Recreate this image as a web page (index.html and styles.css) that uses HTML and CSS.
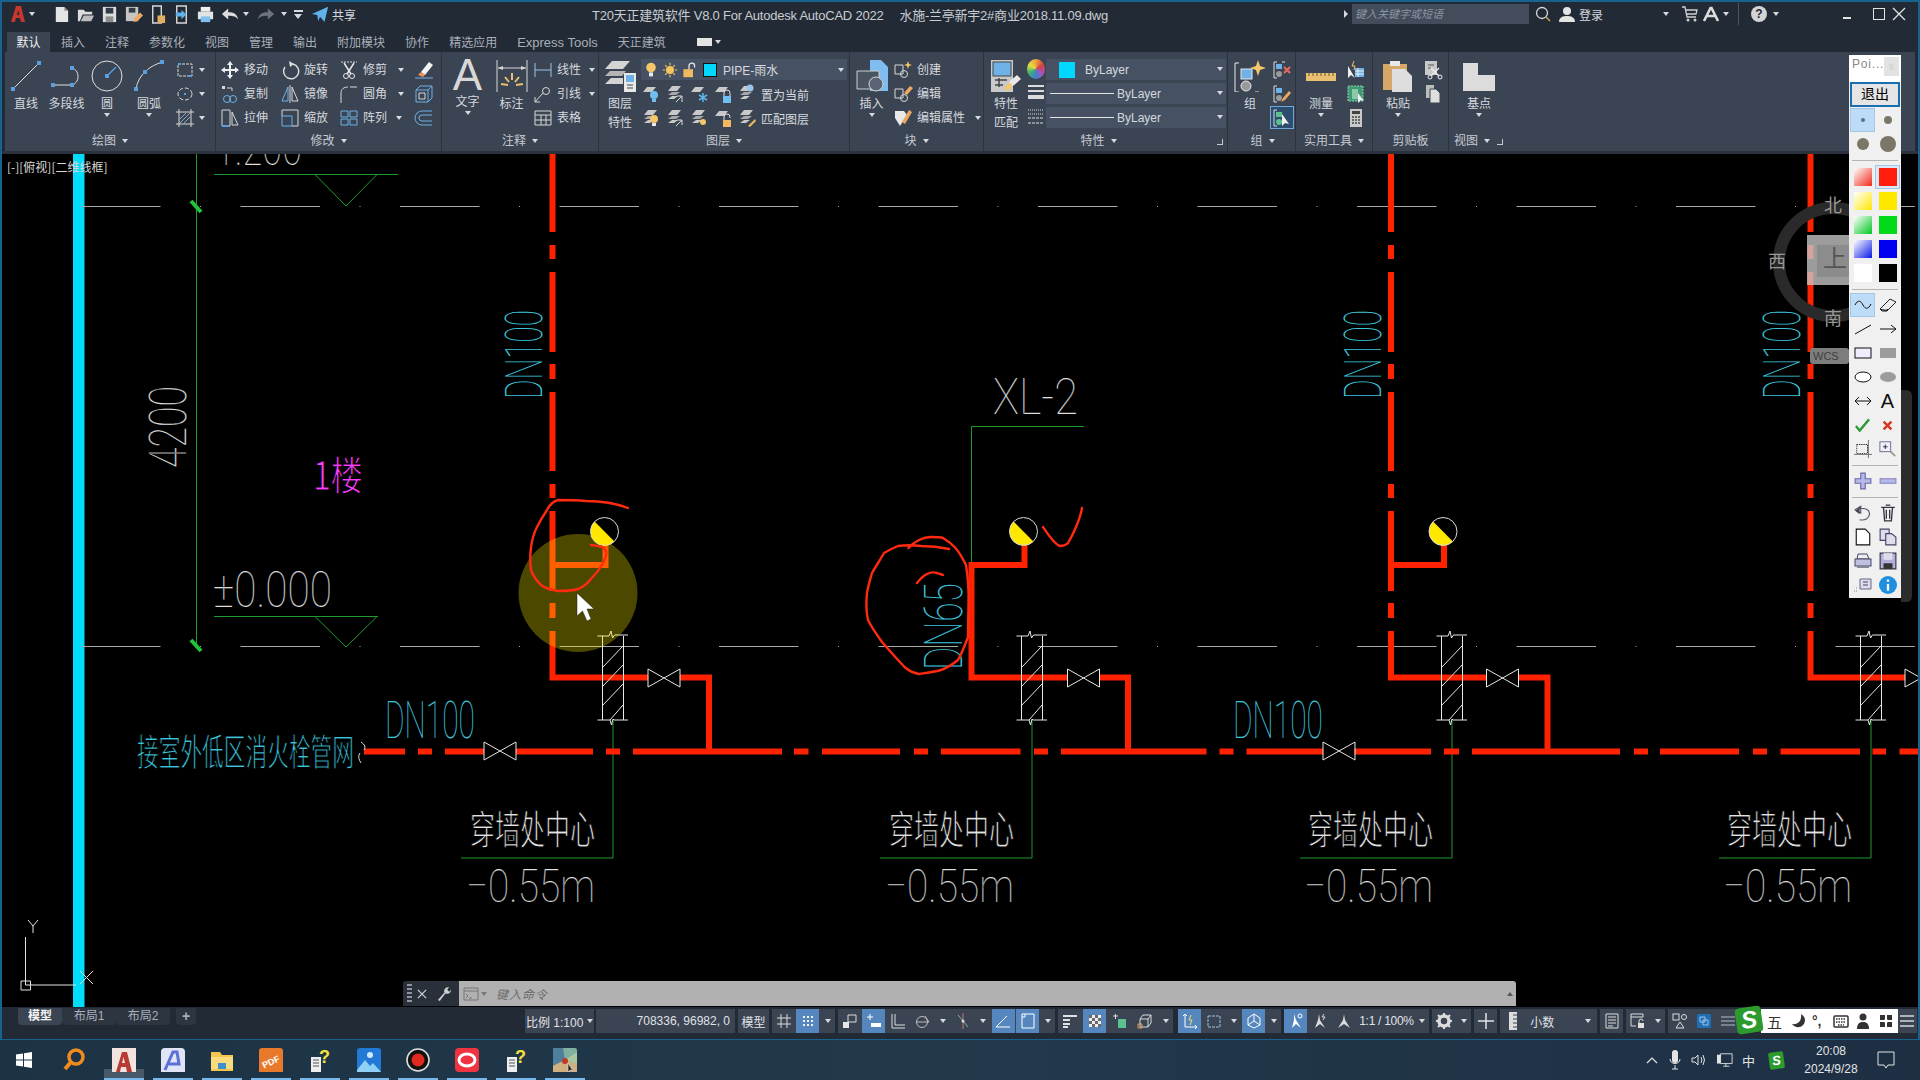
FILE: index.html
```html
<!DOCTYPE html>
<html lang="zh-CN">
<head>
<meta charset="utf-8">
<title>AutoCAD 2022</title>
<link rel="stylesheet" href="styles.css">
</head>
<body>
<svg class="defs" width="0" height="0" aria-hidden="true">
  <defs>
    <symbol id="ly" viewBox="0 0 20 20"><path d="M3 7l4-5h9l-4 5z" fill="#c9c9c9"/><path d="M3 11l4-3h8l-4 3z" fill="#a8a8a8"/><path d="M3 15l4-3h6l-4 3z" fill="#c9c9c9"/></symbol>
    <symbol id="ly1" viewBox="0 0 20 20"><path d="M2 8l4-5h9l-4 5z" fill="#c9c9c9"/></symbol>
    <symbol id="bulb" viewBox="0 0 20 20"><circle cx="10" cy="7" r="6" fill="#f5c66a"/><rect x="7.5" y="13" width="5" height="5" fill="#e8e8e8"/></symbol>
    <symbol id="sun" viewBox="0 0 20 20"><circle cx="10" cy="10" r="5" fill="#f6c75f"/><path d="M10 1v3M10 16v3M1 10h3M16 10h3M4 4l2 2M14 14l2 2M16 4l-2 2M6 14l-2 2" stroke="#f6c75f" stroke-width="1.4"/></symbol>
    <symbol id="lock" viewBox="0 0 20 20"><rect x="3" y="9" width="12" height="10" fill="#f0b860"/><path d="M10 9V5a3.5 3.5 0 0 1 7 0v2" fill="none" stroke="#e8e8e8" stroke-width="1.6"/></symbol>
    <g id="wall" fill="none" stroke="#e8e8e8" stroke-width="1">
      <path d="M597.5 636H609l2-5 1.500 7 2-3H628M602.500 636V720M623.500 636V720M597.500 720H610l1.500 5 1.500-6 1 1H628"/>
      <path d="M603 667L623 646M603 686L623 665M603 705L623 684M610 720L623 705"/>
    </g>
    <path id="bow" d="M0 0L32 18V0L0 18Z" fill="none" stroke="#e8e8e8" stroke-width="1"/>
    <g id="head">
      <path d="M594.600 521.600A14 14 0 0 0 614.400 541.400Z" fill="#ffe800"/>
      <circle cx="604.500" cy="531.500" r="14" fill="none" stroke="#dcdcdc" stroke-width="1"/>
    </g>
  </defs>
</svg>

<div class="window">
  <header class="titlebar">
    <div class="qat">
      <svg class="logo" viewBox="0 0 16 18"><path d="M1 17L6 1h5l4 16h-4l-1-4H6l-1 4zM7 10h2.500L8.300 5z" fill="#c8372d"/></svg>
      <i class="ar ar-logo"></i>
      <svg class="q q-first" viewBox="0 0 20 20"><path d="M4 2h9l4 4v12H4z" fill="#e4e4e4"/><path d="M13 2v4h4" fill="#8a8a8a"/></svg>
      <svg class="q" viewBox="0 0 20 20"><path d="M2 17V5h6l2 2h7v3H7l-3 7z" fill="#dcdcdc"/><path d="M5 17l3-6h11l-3 6z" fill="#bdbdbd"/></svg>
      <svg class="q" viewBox="0 0 20 20"><path d="M3 2h14v16H3z" fill="#dcdcdc"/><path d="M6 3h8v6H6z" fill="#333b47"/><path d="M6 12h8v6H6z" fill="#8d8d8d"/></svg>
      <svg class="q" viewBox="0 0 20 20"><path d="M2 2h13v15H2z" fill="#c6c6c6"/><path d="M5 3h7v5H5z" fill="#333b47"/><path d="M10 18l1-4 6-6 3 3-6 6z" fill="#f0a860"/></svg>
      <svg class="q" viewBox="0 0 20 20"><path d="M5 1h9v18H5z" fill="none" stroke="#d8d8d8" stroke-width="1.500"/><path d="M10 11h8v8h-8z" fill="#e0b060"/></svg>
      <svg class="q" viewBox="0 0 20 20"><path d="M5 1h10v18H5z" fill="none" stroke="#d8d8d8" stroke-width="1.500"/><path d="M4 8h6V5l5 5-5 5v-3H4z" fill="#5fb2ea"/></svg>
      <svg class="q" viewBox="0 0 20 20"><path d="M5 2h10v5H5z" fill="#f0f0f0"/><path d="M2 7h16v8H2z" fill="#e4e4e4"/><path d="M5 12h10v6H5z" fill="#7fc0ee"/></svg>
      <svg class="u" viewBox="0 0 20 20"><path d="M1 10l7-6v4c6 0 10 2 11 8-2-3-5-4-11-4v4z" fill="#dcdcdc"/></svg>
      <i class="ar ar-u"></i>
      <svg class="u r" viewBox="0 0 20 20"><path d="M19 10l-7-6v4C6 8 2 10 1 16c2-3 5-4 11-4v4z" fill="#6d747f"/></svg>
      <i class="ar ar-u ar-dim"></i>
      <span class="cust"></span>
      <svg class="share" viewBox="0 0 20 20"><path d="M1 10L19 2l-4 17-5-6-2 5-1-7z" fill="#5fb2ea"/></svg>
      <span class="share-t">共享</span>
    </div>
    <div class="app-title"><span>T20天正建筑软件 V8.0 For Autodesk AutoCAD 2022</span><span>水施-兰亭新宇2#商业2018.11.09.dwg</span></div>
    <div class="tb-right">
      <i class="tri-r"></i>
      <div class="search">键入关键字或短语</div>
      <svg class="mag" viewBox="0 0 16 16"><circle cx="7" cy="7" r="5.500" fill="none" stroke="#d8d8d8" stroke-width="1.300"/><path d="M11 11l4 4" stroke="#d0a060" stroke-width="1.500"/></svg>
      <svg class="user" viewBox="0 0 16 16"><circle cx="8" cy="5" r="4" fill="#e4e4e4"/><path d="M0 16c0-5 4-6 8-6s8 1 8 6z" fill="#e4e4e4"/></svg>
      <span class="login">登录</span>
      <i class="ar ar-login"></i>
      <svg class="cart" viewBox="0 0 18 18"><path d="M1 2h3l2 10h9M5 5h11l-1 4H6" fill="none" stroke="#cfcfcf" stroke-width="1.300"/><circle cx="7" cy="15" r="1.500" fill="#cfcfcf"/><circle cx="14" cy="15" r="1.500" fill="#cfcfcf"/></svg>
      <svg class="a360" viewBox="0 0 18 18"><path d="M9 2L2 16M9 2l7 14M5 11h8" fill="none" stroke="#dcdcdc" stroke-width="2.600"/></svg>
      <i class="ar ar-a"></i>
      <span class="vdiv"></span>
      <span class="help">?</span>
      <i class="ar ar-h"></i>
      <span class="wmin"></span>
      <span class="wmax"></span>
      <svg class="wclose" viewBox="0 0 14 14"><path d="M1 1l12 12M13 1L1 13" stroke="#e4e4e4" stroke-width="1.300"/></svg>
    </div>
  </header>

  <nav class="tabs">
    <span class="tab on">默认</span><span class="tab">插入</span><span class="tab">注释</span><span class="tab">参数化</span><span class="tab">视图</span><span class="tab">管理</span><span class="tab">输出</span><span class="tab">附加模块</span><span class="tab">协作</span><span class="tab">精选应用</span><span class="tab en">Express Tools</span><span class="tab">天正建筑</span>
    <span class="tabbox"></span><i class="ar ar-tab"></i>
  </nav>

  <section class="ribbon">
    <!-- 绘图 -->
    <div class="panel p-draw">
      <div class="pbody">
        <div class="lg w42"><svg class="big" viewBox="0 0 32 32"><path d="M3 29L29 3" stroke="#e0e0e0"/><rect x="1" y="27" width="4" height="4" fill="#5a9fe0"/><rect x="27" y="1" width="4" height="4" fill="#5a9fe0"/></svg><span>直线</span></div>
        <div class="lg w39"><svg class="big" viewBox="0 0 32 32"><path d="M2 25H21A9 9 0 0 0 21 8" fill="none" stroke="#e0e0e0"/><rect x="0" y="23" width="4" height="4" fill="#5a9fe0"/><rect x="19" y="23" width="4" height="4" fill="#5a9fe0"/><rect x="19" y="6" width="4" height="4" fill="#5a9fe0"/></svg><span>多段线</span></div>
        <div class="lg w42"><svg class="big" viewBox="0 0 32 32"><circle cx="16" cy="16" r="15" fill="none" stroke="#e0e0e0"/><path d="M16 16L25 7" stroke="#5a9fe0" stroke-width="1.500"/><rect x="14" y="14" width="4" height="4" fill="#5a9fe0"/></svg><span>圆</span><i class="ar ar-lg"></i></div>
        <div class="lg w42"><svg class="big" viewBox="0 0 32 32"><path d="M3 30C4 18 14 6 30 2" fill="none" stroke="#e0e0e0"/><rect x="1" y="27" width="4" height="4" fill="#5a9fe0"/><rect x="10" y="10" width="4" height="4" fill="#5a9fe0"/><rect x="27" y="0" width="4" height="4" fill="#5a9fe0"/></svg><span>圆弧</span><i class="ar ar-lg"></i></div>
        <div class="col col-dr">
          <div class="s"><svg class="i" viewBox="0 0 20 20"><path d="M3 4h14v12H3z" fill="none" stroke="#d8d8d8" stroke-dasharray="3 1"/><path d="M3 4h3M17 16h-3" stroke="#5a9fe0" stroke-width="2"/></svg><i class="ar ar-s"></i></div>
          <div class="s"><svg class="i" viewBox="0 0 20 20"><ellipse cx="10" cy="10" rx="7" ry="6" fill="none" stroke="#d8d8d8" stroke-dasharray="4 2"/><rect x="9" y="9" width="2" height="2" fill="#5a9fe0"/></svg><i class="ar ar-s"></i></div>
          <div class="s"><svg class="i" viewBox="0 0 20 20"><path d="M1 4h18M1 16h18M4 1v18M16 1v18" stroke="#d8d8d8" fill="none"/><path d="M5 15L15 5M5 11l6-6M9 15l6-6" stroke="#8fa9c8"/></svg><i class="ar ar-s"></i></div>
        </div>
      </div>
      <div class="pfoot"><span>绘图</span><i class="ar"></i></div>
    </div>

    <!-- 修改 -->
    <div class="panel p-mod">
      <div class="pbody">
        <div class="col col60">
          <div class="s"><svg class="i" viewBox="0 0 20 20"><path d="M10 1l3 4h-2v4h4V7l4 3-4 3v-2h-4v4h2l-3 4-3-4h2v-4H5v2l-4-3 4-3v2h4V5H7z" fill="#eee"/></svg><span>移动</span></div>
          <div class="s"><svg class="i" viewBox="0 0 20 20"><rect x="2" y="2" width="3" height="3" fill="#d8d8d8"/><path d="M7 4h5v3" fill="none" stroke="#d8d8d8"/><circle cx="7" cy="15" r="3.500" fill="none" stroke="#6fb2e8"/><circle cx="13" cy="15" r="3.500" fill="none" stroke="#6fb2e8"/></svg><span>复制</span></div>
          <div class="s"><svg class="i" viewBox="0 0 20 20"><path d="M2 2h8v16H2zM12 4l6 13h-6z" fill="none" stroke="#d8d8d8"/><path d="M2 18h6" stroke="#5a9fe0" stroke-width="2"/></svg><span>拉伸</span></div>
        </div>
        <div class="col col59">
          <div class="s"><svg class="i" viewBox="0 0 20 20"><path d="M13 4A7.500 7.500 0 1 1 5 7" fill="none" stroke="#e0e0e0" stroke-width="1.400"/><path d="M9 1l5 3-4 3z" fill="#e0e0e0"/></svg><span>旋转</span></div>
          <div class="s"><svg class="i" viewBox="0 0 20 20"><path d="M8 3L2 17h6z" fill="none" stroke="#6fb2e8"/><path d="M12 3l6 14h-6z" fill="none" stroke="#d8d8d8"/><path d="M10 1v18" stroke="#d8d8d8"/></svg><span>镜像</span></div>
          <div class="s"><svg class="i" viewBox="0 0 20 20"><path d="M2 8h10v10H2z" fill="none" stroke="#6fb2e8"/><path d="M2 8V2h16v16h-6" fill="none" stroke="#d8d8d8"/></svg><span>缩放</span></div>
        </div>
        <div class="col col75">
          <div class="s"><svg class="i" viewBox="0 0 20 20"><path d="M2 2h16" stroke="#d8d8d8" stroke-dasharray="2 1"/><path d="M5 3l7 11M15 3L8 14" stroke="#e8e8e8" stroke-width="1.500"/><circle cx="7" cy="16" r="2.500" fill="none" stroke="#e8e8e8"/><circle cx="13" cy="16" r="2.500" fill="none" stroke="#e8e8e8"/></svg><span>修剪</span><i class="ar ar-m"></i></div>
          <div class="s"><svg class="i" viewBox="0 0 20 20"><path d="M2 19V9C2 5 5 3 9 3" fill="none" stroke="#d8d8d8"/><path d="M11 3h7" stroke="#d8d8d8"/></svg><span>圆角</span><i class="ar ar-m"></i></div>
          <div class="s"><svg class="i" viewBox="0 0 20 20"><path d="M2 3h7v6H2zM11 3h7v6h-7zM2 11h7v6H2zM11 11h7v6h-7z" fill="none" stroke="#6fb2e8"/></svg><span>阵列</span><i class="ar ar-m ar-m2"></i></div>
        </div>
        <div class="col">
          <div class="s"><svg class="i" viewBox="0 0 20 20"><path d="M7 12l8-10 4 3-8 10z" fill="#f4f4f4"/><path d="M4 15l3-3 4 3-2 2z" fill="#f0905a"/><path d="M1 18h18" stroke="#6fb2e8"/></svg></div>
          <div class="s"><svg class="i" viewBox="0 0 20 20"><path d="M2 6h12v12H2zM2 6l4-4h12v12l-4 4M14 6l4-4" fill="none" stroke="#6fb2e8"/><path d="M5 9h6v6H5z" fill="none" stroke="#d8d8d8"/></svg></div>
          <div class="s"><svg class="i" viewBox="0 0 20 20"><path d="M18 3H8a7 7 0 0 0 0 14h10M18 7H8a3 3 0 0 0 0 6h10" fill="none" stroke="#6fb2e8"/></svg></div>
        </div>
      </div>
      <div class="pfoot"><span>修改</span><i class="ar"></i></div>
    </div>

    <!-- 注释 -->
    <div class="panel p-ann">
      <div class="pbody">
        <div class="lg w48"><span class="bigA">A</span><span>文字</span><i class="ar ar-lg"></i></div>
        <div class="lg w37"><svg class="big" viewBox="0 0 32 32"><path d="M1 0v32M31 0v32M2 8h28" fill="none" stroke="#d8d8d8"/><path d="M2 8l5-2v4zM30 8l-5-2v4z" fill="#d8d8d8"/><path d="M16 13v7M9 17l4 5M23 17l-4 5M5 24l7 1M27 24l-7 1" stroke="#e8c070" stroke-width="2"/></svg><span>标注</span></div>
        <div class="col col-an">
          <div class="s"><svg class="i" viewBox="0 0 20 20"><path d="M2 3v14M18 3v14M2 10h16" fill="none" stroke="#9cc4e8"/></svg><span>线性</span><i class="ar ar-an"></i></div>
          <div class="s"><svg class="i" viewBox="0 0 20 20"><path d="M2 18l8-9" stroke="#d8d8d8"/><circle cx="13" cy="7" r="3.500" fill="none" stroke="#d8d8d8"/><path d="M2 13v5h5" fill="none" stroke="#d8d8d8"/></svg><span>引线</span><i class="ar ar-an"></i></div>
          <div class="s"><svg class="i" viewBox="0 0 20 20"><path d="M2 3h16v14H2zM2 7h16M2 12h16M8 7v10M13 7v10" fill="none" stroke="#d8d8d8"/></svg><span>表格</span></div>
        </div>
      </div>
      <div class="pfoot"><span>注释</span><i class="ar"></i></div>
    </div>

    <!-- 图层 -->
    <div class="panel p-lay">
      <div class="pbody">
        <div class="lg w42 two"><svg class="big" viewBox="0 0 32 32"><path d="M1 9l7-8h18l-7 8z" fill="#d4d4d4"/><path d="M1 16l5-5h16l-4 5z" fill="#b4b4b4"/><path d="M1 24l6-6h12v6z" fill="#d4d4d4"/><rect x="20" y="13" width="12" height="19" fill="#e8e8e8"/><rect x="22" y="15" width="8" height="7" fill="#6fb2e8"/><path d="M23 25h6M23 28h6" stroke="#444"/></svg><span>图层</span><span>特性</span></div>
        <div class="lay-main">
          <div class="lay-drop">
            <svg class="st" viewBox="0 0 20 20"><use href="#bulb"/></svg>
            <svg class="st" viewBox="0 0 20 20"><use href="#sun"/></svg>
            <svg class="st" viewBox="0 0 20 20"><use href="#lock"/></svg>
            <span class="swatch"></span><span class="lay-name">PIPE-雨水</span><i class="ar ar-drop"></i>
          </div>
          <div class="lay-row">
            <svg class="lay-i" viewBox="0 0 20 20"><use href="#ly1"/><circle cx="13" cy="11" r="4" fill="#6fc0f0"/><path d="M11 15h4v3h-4z" fill="#6fc0f0"/></svg>
            <svg class="lay-i" viewBox="0 0 20 20"><use href="#ly"/><path d="M11 18l6-6M17 18v-6h-5" stroke="#ddd" fill="none"/></svg>
            <svg class="lay-i" viewBox="0 0 20 20"><use href="#ly1"/><path d="M14 9v9M10 11l8 5M18 11l-8 5" stroke="#5fb2ea" stroke-width="1.500"/></svg>
            <svg class="lay-i" viewBox="0 0 20 20"><use href="#ly1"/><rect x="10" y="12" width="8" height="7" fill="#6fc0f0"/><path d="M11 12V9a3 3 0 0 1 6 0v3" fill="none" stroke="#e0e0e0"/></svg>
            <svg class="lay-i" viewBox="0 0 20 20"><use href="#ly"/><circle cx="13" cy="4" r="3.500" fill="#9cc4e8"/></svg>
            <span class="lay-t">置为当前</span>
          </div>
          <div class="lay-row">
            <svg class="lay-i" viewBox="0 0 20 20"><use href="#ly"/><circle cx="13" cy="11" r="4" fill="#f5c66a"/><path d="M11 15h4v3h-4z" fill="#e8e8e8"/></svg>
            <svg class="lay-i" viewBox="0 0 20 20"><use href="#ly"/><path d="M11 18l6-6M17 12h-5M17 12v5" stroke="#ddd" fill="none"/></svg>
            <svg class="lay-i" viewBox="0 0 20 20"><use href="#ly"/><circle cx="14" cy="14" r="3" fill="#f5c66a"/></svg>
            <svg class="lay-i" viewBox="0 0 20 20"><use href="#ly1"/><rect x="10" y="12" width="8" height="7" fill="#f0b860"/><path d="M11 12V9a3 3 0 0 1 6 0v1" fill="none" stroke="#e0e0e0"/></svg>
            <svg class="lay-i" viewBox="0 0 20 20"><use href="#ly"/><path d="M11 18l7-7 1 2-6 6z" fill="#f0b860"/></svg>
            <span class="lay-t">匹配图层</span>
          </div>
        </div>
      </div>
      <div class="pfoot"><span>图层</span><i class="ar"></i></div>
    </div>

    <!-- 块 -->
    <div class="panel p-blk">
      <div class="pbody">
        <div class="lg w43"><svg class="big" viewBox="0 0 32 32"><path d="M14 0h11l7 7v24H14z" fill="#7fbcef"/><path d="M1 11h22v18H1z" fill="#4a5564" stroke="#cfcfcf"/><circle cx="20" cy="24" r="7" fill="#5a6474" stroke="#d8d8d8"/></svg><span>插入</span><i class="ar ar-lg"></i></div>
        <div class="col col-blk">
          <div class="s"><svg class="i" viewBox="0 0 20 20"><path d="M2 5h8v9H2z" fill="none" stroke="#d8d8d8"/><circle cx="11" cy="14" r="3.500" fill="none" stroke="#d8d8d8"/><path d="M15 1l1 3 3 1-3 1-1 3-1-3-3-1 3-1z" fill="#f5c66a"/></svg><span>创建</span></div>
          <div class="s"><svg class="i" viewBox="0 0 20 20"><path d="M2 5h8v9H2z" fill="none" stroke="#d8d8d8"/><circle cx="11" cy="14" r="3.500" fill="none" stroke="#d8d8d8"/><path d="M11 9l6-7 3 2-6 7z" fill="#f0a860"/></svg><span>编辑</span></div>
          <div class="s"><svg class="i" viewBox="0 0 20 20"><path d="M2 3h9l3 4-7 11-5-8z" fill="#e8e8e8"/><path d="M9 14l7-12 3 2-7 12z" fill="#f0a860"/></svg><span>编辑属性</span><i class="ar ar-bl"></i></div>
        </div>
      </div>
      <div class="pfoot"><span>块</span><i class="ar"></i></div>
    </div>

    <!-- 特性 -->
    <div class="panel p-prop">
      <div class="pbody">
        <div class="lg w44 two"><svg class="big" viewBox="0 0 32 32"><rect x="1" y="0" width="22" height="32" fill="#c9c9c9"/><rect x="3" y="2" width="18" height="14" fill="#6fb2e8" stroke="#444"/><path d="M5 20h12M5 25h8M9 18v9" stroke="#444" stroke-width="1.500"/><path d="M14 28l6-6 3 3-5 6z" fill="#f5c66a"/><path d="M19 22l8-7 4 4-8 7z" fill="#e8e8e8"/></svg><span>特性</span><span>匹配</span></div>
        <div class="prop-ic">
          <span class="wheel"></span>
          <svg class="i" viewBox="0 0 20 20"><path d="M2 3h16M2 8h16" stroke="#dcdcdc" stroke-width="2"/><path d="M2 14h16" stroke="#dcdcdc" stroke-width="4"/></svg>
          <svg class="i" viewBox="0 0 20 20"><path d="M2 3h16M2 7h16" stroke="#dcdcdc" stroke-dasharray="1 1"/><path d="M2 11h16M2 16h16" stroke="#dcdcdc" stroke-dasharray="3 1"/></svg>
        </div>
        <div class="prop-drops">
          <div class="drop"><span class="sw2"></span><span class="dt1">ByLayer</span><i class="ar ar-drop2"></i></div>
          <div class="drop"><span class="ln"></span><span>ByLayer</span><i class="ar ar-drop2"></i></div>
          <div class="drop"><span class="ln"></span><span>ByLayer</span><i class="ar ar-drop2"></i></div>
        </div>
      </div>
      <div class="pfoot f-prop"><span>特性</span><i class="ar"></i><span class="launch"></span></div>
    </div>

    <!-- 组 -->
    <div class="panel p-grp">
      <div class="pbody">
        <div class="lg w40"><svg class="big" viewBox="0 0 32 32"><path d="M5 3H1v29h4M21 32h4" fill="none" stroke="#e8e8e8"/><rect x="7" y="9" width="11" height="10" fill="#6fb2e8" stroke="#e8e8e8"/><circle cx="12" cy="26" r="5" fill="#999" stroke="#e8e8e8"/><path d="M24 0l2 6 6 2-6 2-2 6-2-6-6-2 6-2z" fill="#f5c66a"/></svg><span>组</span></div>
        <div class="col">
          <div class="s"><svg class="i" viewBox="0 0 20 20"><path d="M5 2H2v16h3M10 2h3" fill="none" stroke="#dcdcdc"/><rect x="4" y="4" width="6" height="5" fill="#6fb2e8"/><circle cx="7" cy="14" r="3" fill="#999"/><path d="M12 7l6 6M18 7l-6 6" stroke="#e86a5a" stroke-width="2"/></svg></div>
          <div class="s"><svg class="i" viewBox="0 0 20 20"><path d="M5 2H2v16h3" fill="none" stroke="#dcdcdc"/><rect x="4" y="4" width="6" height="5" fill="#6fb2e8"/><circle cx="7" cy="14" r="3" fill="#999"/><path d="M9 18l2-4 6-7 2 2-6 7z" fill="#f0a860"/></svg></div>
          <div class="s s-on"><svg class="i" viewBox="0 0 20 20"><path d="M5 2H2v16h3" fill="none" stroke="#dcdcdc"/><rect x="4" y="4" width="6" height="5" fill="#5cc090"/><circle cx="7" cy="14" r="3" fill="#5cc090"/><path d="M10 6v12l3-3 4 1z" fill="#f0f0f0"/></svg></div>
        </div>
      </div>
      <div class="pfoot f-grp"><span>组</span><i class="ar"></i></div>
    </div>

    <!-- 实用工具 -->
    <div class="panel p-uti">
      <div class="pbody">
        <div class="lg w50"><svg class="big" viewBox="0 0 32 32"><rect x="1" y="13" width="30" height="8" fill="#e8c070"/><path d="M4 13v3M8 13v3M12 13v3M16 13v3M20 13v3M24 13v3M28 13v3" stroke="#6d5a30"/></svg><span>测量</span><i class="ar ar-lg"></i></div>
        <div class="col">
          <div class="s"><svg class="i" viewBox="0 0 20 20"><path d="M2 6v12l3-3 4 3z" fill="#f0f0f0"/><rect x="9" y="8" width="9" height="9" fill="#6fb2e8"/><path d="M9 11h9M9 14h9M12 8v9" stroke="#eee"/><path d="M8 1l-2 5h3l-1 4" stroke="#f5c66a" fill="none"/></svg></div>
          <div class="s"><svg class="i" viewBox="0 0 20 20"><rect x="2" y="2" width="15" height="15" fill="#3f9a72" stroke="#8ad0b0" stroke-dasharray="2 1"/><rect x="6" y="5" width="6" height="10" fill="#8cc8ab"/><path d="M12 9v10l3-3 3 1z" fill="#f0f0f0"/></svg></div>
          <div class="s"><svg class="i" viewBox="0 0 20 20"><rect x="4" y="1" width="12" height="18" fill="#c9c9c9"/><rect x="6" y="3" width="8" height="3" fill="#444"/><path d="M6 9h2M9 9h2M12 9h2M6 12h2M9 12h2M12 12h2M6 15h2M9 15h2M12 15h2" stroke="#444" stroke-width="1.500"/></svg></div>
        </div>
      </div>
      <div class="pfoot f-uti"><span>实用工具</span><i class="ar"></i></div>
    </div>

    <!-- 剪贴板 -->
    <div class="panel p-clip">
      <div class="pbody">
        <div class="lg w50"><svg class="big" viewBox="0 0 32 32"><path d="M1 4h24v26H1z" fill="#d5a868"/><path d="M8 1h10v5H8z" fill="#e8e8e8"/><path d="M10 9h13l7 7v16H10z" fill="#dedede"/></svg><span>粘贴</span><i class="ar ar-lg"></i></div>
        <div class="col">
          <div class="s"><svg class="i" viewBox="0 0 20 20"><path d="M2 1h12v14H2z" fill="#c9c9c9"/><path d="M5 5h6M5 8h3" stroke="#555"/><path d="M8 8l8 8M16 8l-8 8" stroke="#eee" stroke-width="1.300"/><circle cx="7" cy="17" r="2" fill="none" stroke="#eee"/><circle cx="17" cy="17" r="2" fill="none" stroke="#eee"/></svg></div>
          <div class="s"><svg class="i" viewBox="0 0 20 20"><path d="M3 1h8v13H3z" fill="#bcbcbc"/><path d="M7 5h6l4 4v10H7z" fill="#dedede" stroke="#3b4453"/></svg></div>
        </div>
      </div>
      <div class="pfoot f-clip"><span>剪贴板</span></div>
    </div>

    <!-- 视图 -->
    <div class="panel p-view">
      <div class="pbody">
        <div class="lg w60"><svg class="big" viewBox="0 0 32 32"><path d="M0 3h15v12h17v16H0z" fill="#dcdcdc"/></svg><span>基点</span><i class="ar ar-lg"></i></div>
      </div>
      <div class="pfoot f-view"><span>视图</span><i class="ar"></i><span class="launch l2"></span></div>
    </div>
  </section>
  <div class="ribbon-gap"></div>

  <main class="canvas">
    <svg class="cad" viewBox="2 154 1916 853" preserveAspectRatio="none">
      <rect class="cyan" x="73" y="154" width="11.500" height="853"/>
      <!-- gray dashed axis -->
      <path class="axis" d="M81 206.500H1920M81 646.500H1920"/>
      <!-- dimension -->
      <path class="gr" d="M196.500 154V646M214 174.500H398M315 174.500L346 206L377 174.500M214 616.500H378M315 616.500L346 647L377 616.500"/>
      <path class="tick" d="M191 201L201 212M191 640L201 651"/>

      <!-- green leaders -->
      <path class="gr" d="M613 720V858H461M1032 720V858H880M1452 720V858H1300M1871 720V858H1719M971.500 565V426.500H1084"/>

      <!-- red pipes -->
      <path class="pipe" d="M552.500 154V232M552.500 245V259M552.500 272V352M552.500 364V379M552.500 392V471M552.500 484V498M552.500 511V591M552.500 603V618M552.500 631V680M549.500 677.500H648M680 677.500H709V751M552.500 565H605.500V545"/>
      <path class="pipe" d="M971.500 562V680M968.500 677.500H1067M1100 677.500H1128V751M971.500 565H1024.500V545"/>
      <path class="pipe" d="M1391 154V232M1391 245V259M1391 272V352M1391 364V379M1391 392V471M1391 484V498M1391 511V591M1391 603V618M1391 631V680M1388 677.500H1486M1519 677.500H1547.500V751M1391 565H1444V545"/>
      <path class="pipe" d="M1810.500 154V232M1810.500 245V259M1810.500 272V352M1810.500 364V379M1810.500 392V471M1810.500 484V498M1810.500 511V591M1810.500 603V618M1810.500 631V680M1807.500 677.500H1905"/>
      <path class="pipe" d="M364 751.500H405M418 751.500H432M445 751.500H484M516 751.500H593M606 751.500H620M633 751.500H782M794 751.500H808.500M822 751.500H900M914 751.500H928M941 751.500H1020.500M1034 751.500H1048M1061 751.500H1206.500M1219.500 751.500H1233.500M1246.500 751.500H1323M1354.500 751.500H1431M1444 751.500H1459M1472 751.500H1620M1634 751.500H1648M1660 751.500H1739M1753 751.500H1767M1780.500 751.500H1860M1872.500 751.500H1886M1899.500 751.500H1920"/>

      <!-- walls, valves, heads -->
      <use href="#wall"/><use href="#wall" x="419"/><use href="#wall" x="839"/><use href="#wall" x="1258"/>
      <use href="#bow" x="648" y="669"/><use href="#bow" x="1067.500" y="669"/><use href="#bow" x="1486.500" y="669"/><use href="#bow" x="1905" y="669"/>
      <use href="#bow" x="484" y="742"/><use href="#bow" x="1323" y="742"/>
      <use href="#head"/><use href="#head" x="419"/><use href="#head" x="838.500"/>

      <path class="wh" d="M361 742Q367 746 364 750M361 763Q357 757 360 753"/>

      <!-- cad text -->
      <g class="txt lat">
        <text x="215" y="165" textLength="87" lengthAdjust="spacingAndGlyphs" font-size="50">1.200</text>
        <text x="213" y="607" textLength="119" lengthAdjust="spacingAndGlyphs" font-size="50">±0.000</text>
        <text x="186" y="468" textLength="82" lengthAdjust="spacingAndGlyphs" font-size="52" transform="rotate(-90 186 468)">4200</text>
        <text x="993" y="414" textLength="85" lengthAdjust="spacingAndGlyphs" font-size="50">XL-2</text>
        <text x="466" y="902" textLength="129" lengthAdjust="spacingAndGlyphs" font-size="47">−0.55m</text>
        <text x="885" y="902" textLength="129" lengthAdjust="spacingAndGlyphs" font-size="47">−0.55m</text>
        <text x="1304" y="902" textLength="129" lengthAdjust="spacingAndGlyphs" font-size="47">−0.55m</text>
        <text x="1723" y="902" textLength="129" lengthAdjust="spacingAndGlyphs" font-size="47">−0.55m</text>
      </g>
      <g class="txt cjk">
        <text x="470" y="844" textLength="125" lengthAdjust="spacingAndGlyphs" font-size="40">穿墙处中心</text>
        <text x="889" y="844" textLength="125" lengthAdjust="spacingAndGlyphs" font-size="40">穿墙处中心</text>
        <text x="1308" y="844" textLength="125" lengthAdjust="spacingAndGlyphs" font-size="40">穿墙处中心</text>
        <text x="1727" y="844" textLength="125" lengthAdjust="spacingAndGlyphs" font-size="40">穿墙处中心</text>
      </g>
      <g class="txt lat teal">
        <text x="542" y="399" textLength="89" lengthAdjust="spacingAndGlyphs" font-size="52" transform="rotate(-90 542 399)">DN100</text>
        <text x="1381" y="399" textLength="89" lengthAdjust="spacingAndGlyphs" font-size="52" transform="rotate(-90 1381 399)">DN100</text>
        <text x="1800" y="399" textLength="89" lengthAdjust="spacingAndGlyphs" font-size="52" transform="rotate(-90 1800 399)">DN100</text>
        <text x="962" y="670" textLength="87" lengthAdjust="spacingAndGlyphs" font-size="54" transform="rotate(-90 962 670)">DN65</text>
        <text x="385" y="738" textLength="90" lengthAdjust="spacingAndGlyphs" font-size="52">DN100</text>
        <text x="1233" y="738" textLength="90" lengthAdjust="spacingAndGlyphs" font-size="52">DN100</text>
      </g>
      <text class="txt cjk teal" x="137" y="766" textLength="217" lengthAdjust="spacingAndGlyphs" font-size="37">接室外低区消火栓管网</text>
      <text class="txt cjk mag" x="313" y="490" textLength="50" lengthAdjust="spacingAndGlyphs" font-size="40">1楼</text>

      <!-- pointer highlight -->
      <ellipse class="halo" cx="578" cy="593" rx="59.500" ry="59"/>

      <!-- freehand ink -->
      <path class="ink" d="M628 508C615 503 600 501 586 501C575 500 565 500 558 500C552 502 549 506 547 510C543 516 540 521 537 527C534 533 532 540 531 547C530 555 530 562 531 570C533 576 537 581 541 585C546 589 552 590 558 591C565 591 572 591 578 589C583 587 587 584 590 580C595 575 599 570 602 565C604 561 606 557 606.500 553C606 550 604 548 602 547C598 546 594 545 591 545"/>
      <path class="ink" d="M908.500 548C912 544 915 542 919 540C923 538 927 537 931 537C936 537 940 537 943 538C948 541 952 544 955.500 548C960 553 963 559 966 565C968 578 969 590 968.500 603C968.500 615 968 626 968 637C965 645 962 653 958 660C953 664 947 668 941 670C934 672 926 673 919 674C913 673 908 670 904.500 667C897 659 889 650 882 642C877 635 872 628 868 620C866 611 866 602 867 593C868 586 870 580 872 573C876 566 880 560 884 553C889 550 893 548 898 546C906 545 913 545 921 546C931 546 940 547 949 549"/>
      <path class="ink" d="M917 583C920 579 923 576 927 574C931 572 934 572 937 573C939 574 941 574 943 575"/>
      <path class="ink" d="M1043 527C1046 531 1048 535 1051 538C1054 542 1057 545 1060 546C1063 546 1066 545 1068 543C1071 538 1074 532 1076 527C1079 520 1081 514 1082 508"/>

      <!-- compass -->
      <circle class="ring" cx="1833" cy="262" r="54"/>
      <rect class="cube" x="1807" y="235" width="42" height="50"/>
      <rect class="cube2" x="1817" y="245" width="32" height="32"/>
      <text class="cube-t" x="1823" y="267">上</text>
      <text class="dir" x="1833" y="212">北</text>
      <text class="dir" x="1833" y="325">南</text>
      <text class="dir" x="1777" y="268">西</text>
      <rect class="wcs" x="1810" y="348" width="39" height="16" rx="3"/>
      <text class="wcs-t" x="1813" y="360">WCS</text>
      <path class="navbar" d="M1901 390H1906Q1912 390 1912 396V596Q1912 602 1906 602H1901Z"/>

      <!-- UCS -->
      <path class="ucs" d="M25.500 937V985H76M21 981h9.500v9H21zM80 971L93 984M93 971L80 984M28 920L33 926L38 920M33 926V933"/>
      <text class="vp" x="7" y="172">[-][俯视][二维线框]</text>
      <!-- mouse -->
      <path class="cursor" d="M577 593V616L582.500 611L587 621L591 619L587 609L594 609Z"/>
    </svg>

    <div class="cmd">
      <div class="cmd-d">
        <span class="grip"></span>
        <svg class="c1" viewBox="0 0 12 12"><path d="M1 1l10 10M11 1L1 11" stroke="#cfcfcf" stroke-width="1.500"/></svg>
        <svg class="c2" viewBox="0 0 16 16"><path d="M2 15l7-8C8 4 10 1 14 1l-2 3 2 2 2-2c0 4-3 5-6 4l-6 8z" fill="#cfcfcf"/></svg>
      </div>
      <div class="cmd-in">
        <svg class="c3" viewBox="0 0 16 14"><path d="M1 1h14v12H1zM1 4h14" fill="none" stroke="#777"/><path d="M3 7l2 2-2 2M6 11h3" fill="none" stroke="#777"/></svg>
        <i class="ar ar-c"></i>
        <span class="cmd-t">键入命令</span>
        <i class="tri-u"></i>
      </div>
    </div>
  </main>

  <footer class="status">
    <div class="layouts">
      <span class="lt on">模型</span><span class="lt">布局1</span><span class="lt">布局2</span><span class="lt plus">+</span>
    </div>
    <div class="sg g-scale"><span>比例 1:100</span><i class="ar ar-sb"></i></div>
    <div class="sg g-coord">708336, 96982, 0</div>
    <div class="sg g-model">模型</div>
    <div class="sg">
      <span class="it"><svg viewBox="0 0 16 16"><path d="M1 5h14M1 11h14M5 1v14M11 1v14" stroke="#dcdcdc"/></svg></span>
      <span class="it on"><svg viewBox="0 0 16 16"><path d="M3 3h2v2H3zM7 3h2v2H7zM11 3h2v2h-2zM3 7h2v2H3zM7 7h2v2H7zM11 7h2v2h-2zM3 11h2v2H3zM7 11h2v2H7zM11 11h2v2h-2z" fill="#f0f0f0"/></svg></span>
      <span class="it-a"><i class="ar ar-sb"></i></span>
    </div>
    <div class="sg g-snap">
      <span class="it"><svg viewBox="0 0 16 16"><path d="M6 9V2h8v7H6z" fill="none" stroke="#dcdcdc"/><path d="M1 9h6v6H1z" fill="#e8e8e8"/></svg></span>
      <span class="it on"><svg viewBox="0 0 16 16"><path d="M1 4h6M4 1v6" stroke="#fff"/><path d="M5 10h10v4H5z" fill="#fff"/></svg></span>
      <span class="it"><svg viewBox="0 0 16 16"><path d="M2 1v14h13M5 1v11h10" fill="none" stroke="#dcdcdc"/></svg></span>
      <span class="it"><svg viewBox="0 0 16 16"><circle cx="8" cy="9" r="5.500" fill="none" stroke="#bcbcbc"/><path d="M3 9h12L11 3" fill="none" stroke="#bcbcbc"/></svg></span>
      <span class="it-a"><i class="ar ar-sb"></i></span>
      <span class="it"><svg viewBox="0 0 16 16"><path d="M8 0L8 16" stroke="#d07070"/><path d="M3 2l10 12" stroke="#70c0a0"/><circle cx="8" cy="8" r="1.500" fill="#ddd"/></svg></span>
      <span class="it-a"><i class="ar ar-sb"></i></span>
      <span class="it on"><svg viewBox="0 0 16 16"><path d="M1 14h14M1 14L12 3" fill="none" stroke="#fff"/></svg></span>
      <span class="it on"><svg viewBox="0 0 16 16"><path d="M2 1h12v14H2zM5 1v3H2" fill="none" stroke="#fff"/></svg></span>
      <span class="it-a"><i class="ar ar-sb"></i></span>
    </div>
    <div class="sg g-c">
      <span class="it"><svg viewBox="0 0 16 16"><path d="M1 3h14M1 7h7M1 11h7M1 14h5" stroke="#e0e0e0" stroke-width="1.800"/></svg></span>
      <span class="it on"><svg viewBox="0 0 16 16"><path d="M2 2h12v12H2z" fill="#eee"/><path d="M2 2h3v3H2zM8 2h3v3H8zM5 5h3v3H5zM11 5h3v3h-3zM2 8h3v3H2zM8 8h3v3H8zM5 11h3v3H5zM11 11h3v3h-3z" fill="#6a6a6a"/></svg></span>
      <span class="it"><svg viewBox="0 0 16 16"><path d="M1 3h5M3.500 1v5" stroke="#dcdcdc"/><path d="M6 6h8v9H6z" fill="#5cc090"/></svg></span>
      <span class="it"><svg viewBox="0 0 16 16"><path d="M3 6h8v8H3zM3 6l3-4h8v8l-3 4M11 6l3-4" fill="none" stroke="#dcdcdc"/><path d="M1 11h4v4H1z" fill="none" stroke="#e0a060"/></svg></span>
      <span class="it-a"><i class="ar ar-sb"></i></span>
    </div>
    <div class="sg g-d">
      <span class="it on"><svg viewBox="0 0 16 16"><path d="M3 1v13h12" fill="none" stroke="#fff"/><path d="M1 3l2-2 2 2M13 12l2 2-2 2" fill="none" stroke="#fff"/><path d="M9 2L7 7h3L8 12" fill="none" stroke="#f5e060"/></svg></span>
      <span class="it"><svg viewBox="0 0 16 16"><path d="M2 3h12v11H2z" fill="none" stroke="#9cc4e8" stroke-dasharray="3 1"/></svg></span>
      <span class="it-a"><i class="ar ar-sb"></i></span>
      <span class="it on"><svg viewBox="0 0 16 16"><path d="M8 1l6 4v7l-6 3-6-3V5zM8 8V1M8 8l6 4M8 8l-6 4" fill="none" stroke="#fff"/></svg></span>
      <span class="it-a"><i class="ar ar-sb"></i></span>
    </div>
    <div class="sg">
      <span class="it on"><svg viewBox="0 0 16 16"><path d="M6 1l2 6 5 8-5-4-4 4 2-8z" fill="#fff"/><circle cx="12" cy="3" r="2" fill="none" stroke="#fff"/></svg></span>
      <span class="it"><svg viewBox="0 0 16 16"><path d="M7 1l1 6 5 8-5-4-5 4 3-8z" fill="#dcdcdc"/><path d="M12 1l-2 3h3l-2 3" stroke="#dcdcdc" fill="none"/></svg></span>
      <span class="it"><svg viewBox="0 0 16 16"><path d="M8 1l1 6 5 8-6-4-6 4 5-8z" fill="#dcdcdc"/></svg></span>
      <span class="ratio">1:1 / 100%</span>
      <span class="it-a"><i class="ar ar-sb"></i></span>
    </div>
    <div class="sg">
      <span class="it"><svg viewBox="0 0 16 16"><circle cx="8" cy="8" r="5" fill="none" stroke="#dcdcdc" stroke-width="3.500"/><path d="M8 0v3M8 13v3M0 8h3M13 8h3M2 2l2 2M12 12l2 2M14 2l-2 2M4 12l-2 2" stroke="#dcdcdc" stroke-width="2"/></svg></span>
      <span class="it-a"><i class="ar ar-sb"></i></span>
    </div>
    <div class="sg"><span class="it"><svg viewBox="0 0 16 16"><path d="M8 0v16M0 8h16" stroke="#e4e4e4" stroke-width="1.500"/></svg></span></div>
    <div class="sg g-unit">
      <svg class="ruler" viewBox="0 0 10 18"><path d="M1 0h8v18H1z" fill="#dcdcdc"/><path d="M5 3h4M5 7h4M5 11h4M5 15h4" stroke="#3b4453"/></svg>
      <span class="unit-t">小数</span><i class="ar ar-sb ar-unit"></i>
    </div>
    <div class="sg"><span class="it"><svg viewBox="0 0 16 16"><path d="M2 1h12v14H2z" fill="none" stroke="#dcdcdc"/><path d="M4 4h8M4 7h8M4 10h8M4 13h5" stroke="#dcdcdc"/></svg></span></div>
    <div class="sg">
      <span class="it"><svg viewBox="0 0 16 16"><path d="M1 1h12v3H1zM1 4v9h5" fill="none" stroke="#dcdcdc"/><path d="M8 10h6v5H8z" fill="#e0e0e0"/><path d="M9 10V8a2 2 0 0 1 4 0" fill="none" stroke="#e0e0e0"/></svg></span>
      <span class="it-a"><i class="ar ar-sb"></i></span>
    </div>
    <div class="sg">
      <span class="it"><svg viewBox="0 0 16 16"><rect x="1" y="1" width="6" height="6" fill="none" stroke="#dcdcdc"/><circle cx="12" cy="4" r="2.500" fill="none" stroke="#dcdcdc"/><path d="M8 9l4 6H4z" fill="none" stroke="#dcdcdc"/></svg></span>
      <span class="it"><svg viewBox="0 0 16 16"><rect x="1" y="1" width="14" height="14" rx="1" fill="#1f6fb5"/><path d="M4 4h5v5H4zM7 7h5v5H7z" fill="none" stroke="#9cc4e8"/></svg></span>
      <span class="it"><svg viewBox="0 0 16 16"><path d="M1 4h14M1 8h14M1 12h14" stroke="#8d95a2" stroke-width="1.500"/></svg></span>
    </div>
    <div class="sg g-menu"><svg viewBox="0 0 14 14"><path d="M0 2h14M0 7h14M0 12h14" stroke="#d8d8d8" stroke-width="1.600"/></svg></div>

    <div class="ime">
      <span class="ime-s">S</span>
      <span class="ime-c">五</span>
      <svg viewBox="0 0 16 16"><path d="M11 1A7 7 0 1 1 2 11C8 12 12 8 11 1z" fill="#333"/></svg>
      <span class="ime-p">°,</span>
      <svg viewBox="0 0 16 16"><rect x="1" y="3" width="14" height="11" rx="1" fill="none" stroke="#333" stroke-width="1.500"/><path d="M3 6h10M3 9h10M5 12h6" stroke="#333" stroke-width="1.500" stroke-dasharray="1.500 1"/></svg>
      <svg viewBox="0 0 16 16"><circle cx="8" cy="4" r="3.500" fill="#333"/><path d="M2 16c0-6 3-7 6-7s6 1 6 7z" fill="#333"/></svg>
      <svg viewBox="0 0 16 16"><path d="M2 2h5v5H2zM9 2h5v5H9zM2 9h5v5H2zM9 9h5v5H9z" fill="#333"/><circle cx="8" cy="8" r="2" fill="#fff"/></svg>
    </div>
  </footer>
</div>

<footer class="taskbar">
  <span class="tk-start"><svg viewBox="0 0 16 16"><path d="M0 2.500l7-1v6H0zM8 1.300L16 0v7.500H8zM0 8.500h7v6l-7-1zM8 8.500h8V16l-8-1.300z" fill="#fff"/></svg></span>
  <span class="tk-search"><svg viewBox="0 0 24 24"><circle cx="14" cy="9" r="7" fill="none" stroke="#f08c1e" stroke-width="3.500"/><path d="M9 14l-6 7" stroke="#f08c1e" stroke-width="4"/></svg></span>
  <span class="tk act"><svg viewBox="0 0 24 24"><rect width="24" height="28" fill="#f1e4df"/><path d="M4 24L10 4h5l5 20h-5l-1-5H9l-1 5zM10 15h3l-1.500-6z" fill="#b83a32"/></svg></span>
  <span class="tk"><svg viewBox="0 0 24 24"><rect x="0" y="0" width="24" height="28" rx="4" fill="#dfe5f7"/><path d="M4 22L12 4h4l2 12H8" fill="none" stroke="#5d6fd6" stroke-width="3"/></svg></span>
  <span class="tk"><svg viewBox="0 0 24 24"><path d="M1 4h9l2 3h11v16H1z" fill="#f3c64e"/><path d="M1 9h22v12H1z" fill="#fbdc7c"/><path d="M8 15h8v6H8z" fill="#3d8fd0"/></svg></span>
  <span class="tk"><svg viewBox="0 0 24 24"><rect x="0" y="0" width="24" height="28" rx="3" fill="#e8792a"/><text class="tk-pdf" x="3" y="17" transform="rotate(-25 12 14)">PDF</text></svg></span>
  <span class="tk"><svg viewBox="0 0 24 24"><path d="M3 9h10v15H3z" fill="#eee"/><path d="M5 12h6M5 15h6M5 18h6" stroke="#555"/><text class="tk-q" x="11" y="15">?</text></svg></span>
  <span class="tk"><svg viewBox="0 0 24 24"><rect width="24" height="27" rx="3" fill="#2379d6"/><path d="M0 22l8-10 5 6 3-3 8 9v3H0z" fill="#8ed0f6"/><circle cx="13" cy="7" r="3" fill="#cfeaff"/></svg></span>
  <span class="tk"><svg viewBox="0 0 24 24"><circle cx="12" cy="12" r="11" fill="#111" stroke="#ddd" stroke-width="1.600"/><circle cx="12" cy="12" r="6.500" fill="#e02a20"/></svg></span>
  <span class="tk"><svg viewBox="0 0 24 24"><rect width="24" height="24" rx="4" fill="#ef3340"/><ellipse cx="12" cy="12" rx="8" ry="6" fill="none" stroke="#fff" stroke-width="3"/></svg></span>
  <span class="tk"><svg viewBox="0 0 24 24"><path d="M3 9h10v15H3z" fill="#eee"/><path d="M5 12h6M5 15h6M5 18h6" stroke="#555"/><text class="tk-q" x="11" y="15">?</text></svg></span>
  <span class="tk"><svg viewBox="0 0 24 24"><rect width="24" height="28" rx="2" fill="#7fb0a0"/><path d="M0 0h10l2 12L0 18z" fill="#4f7f9a"/><path d="M12 12L24 4v12z" fill="#a8c8a0"/><path d="M0 18l12-6 12 4v12H0z" fill="#d0b080"/><circle cx="12" cy="13" r="3" fill="#c03828"/><path d="M15 15v9l2-2 3 1z" fill="#222" stroke="#ddd" stroke-width=".6"/></svg></span>
  <div class="tray">
    <svg class="tr-up" viewBox="0 0 12 8"><path d="M1 7l5-5 5 5" fill="none" stroke="#e4e4e4" stroke-width="1.200"/></svg>
    <svg class="tr-mic" viewBox="0 0 12 20"><rect x="3" y="0" width="6" height="13" rx="3" fill="#e4e4e4"/><path d="M1 9c0 6 10 6 10 0M6 15v4M3 19h6" fill="none" stroke="#e4e4e4"/></svg>
    <svg class="tr-sp" viewBox="0 0 16 16"><path d="M1 6h3l3-3v10l-3-3H1z" fill="none" stroke="#e4e4e4"/><path d="M10 5q2 3 0 6M12 3q3 5 0 10" fill="none" stroke="#e4e4e4"/></svg>
    <svg class="tr-net" viewBox="0 0 18 18"><path d="M4 2h13v11H4zM10 13v3M7 16h7" fill="none" stroke="#e4e4e4"/><path d="M0 3h4v10H0z" fill="#e4e4e4"/></svg>
    <span class="tr-zh">中</span>
    <span class="tr-s">S</span>
    <div class="clock"><span>20:08</span><span>2024/9/28</span></div>
    <svg class="tr-note" viewBox="0 0 18 18"><path d="M1 1h16v13h-6l-2 3-2-3H1z" fill="none" stroke="#e4e4e4"/></svg>
  </div>
</footer>

<aside class="pfx">
  <div class="pfx-head"><span>Poi...</span><b>x</b></div>
  <div class="pfx-exit">退出</div>
  <div class="pr"><span class="pc on"><i class="dot d1"></i></span><span class="pc"><i class="dot d2"></i></span></div>
  <div class="pr"><span class="pc"><i class="dot d3"></i></span><span class="pc"><i class="dot d4"></i></span></div>
  <hr class="pd">
  <div class="pr"><span class="pc"><i class="c g-r"></i></span><span class="pc sel"><i class="c f-r"></i></span></div>
  <div class="pr"><span class="pc"><i class="c g-y"></i></span><span class="pc"><i class="c f-y"></i></span></div>
  <div class="pr"><span class="pc"><i class="c g-g"></i></span><span class="pc"><i class="c f-g"></i></span></div>
  <div class="pr"><span class="pc"><i class="c g-b"></i></span><span class="pc"><i class="c f-b"></i></span></div>
  <div class="pr"><span class="pc"><i class="c f-w"></i></span><span class="pc"><i class="c f-k"></i></span></div>
  <hr class="pd">
  <div class="pr"><span class="pc on"><svg viewBox="0 0 18 12"><path d="M1 6C4 0 7 2 9 6S14 11 17 5" fill="none" stroke="#111"/></svg></span><span class="pc"><svg viewBox="0 0 18 18"><path d="M1 13L11 3l6 3-9 9H3z" fill="#eee" stroke="#222"/><path d="M1 13l6 2 2-2" fill="#999" stroke="#222"/></svg></span></div>
  <div class="pr"><span class="pc"><svg viewBox="0 0 18 12"><path d="M1 11L17 2" stroke="#111"/></svg></span><span class="pc"><svg viewBox="0 0 18 12"><path d="M1 6H17M12 2l5 4-5 4" fill="none" stroke="#111"/></svg></span></div>
  <div class="pr"><span class="pc"><svg viewBox="0 0 18 12"><rect x="1" y="1" width="16" height="10" fill="#eef" stroke="#111"/></svg></span><span class="pc"><svg viewBox="0 0 18 12"><rect x="1" y="1" width="16" height="10" fill="#9c9c9c"/></svg></span></div>
  <div class="pr"><span class="pc"><svg viewBox="0 0 18 12"><ellipse cx="9" cy="6" rx="8" ry="5" fill="#fff" stroke="#111"/></svg></span><span class="pc"><svg viewBox="0 0 18 12"><ellipse cx="9" cy="6" rx="8" ry="5" fill="#9c9c9c"/></svg></span></div>
  <div class="pr"><span class="pc"><svg viewBox="0 0 18 12"><path d="M1 6H17M5 2L1 6l4 4M13 2l4 4-4 4" fill="none" stroke="#111"/></svg></span><span class="pc pc-a">A</span></div>
  <div class="pr"><span class="pc"><svg class="sm" viewBox="0 0 16 14"><path d="M1 8l4 5L15 1" fill="none" stroke="#2c9a3a" stroke-width="2.500"/></svg></span><span class="pc"><svg class="xs" viewBox="0 0 14 14"><path d="M2 2l10 10M12 2L2 12" stroke="#d8321c" stroke-width="3"/></svg></span></div>
  <div class="pr"><span class="pc"><svg viewBox="0 0 20 20"><path d="M0 16h20M16 20V0" stroke="#666"/><path d="M3 5h12v10" fill="none" stroke="#111" stroke-dasharray="1.500 1"/><path d="M3 5v10h12" fill="none" stroke="#111" stroke-dasharray="1 1"/></svg></span><span class="pc"><svg viewBox="0 0 20 20"><rect x="1" y="2" width="12" height="11" fill="#eef" stroke="#668"/><path d="M7 5v5M4.500 7.500h5" stroke="#223"/><path d="M13 13l5 5" stroke="#998" stroke-width="2"/></svg></span></div>
  <hr class="pd">
  <div class="pr"><span class="pc"><svg viewBox="0 0 16 16"><path d="M6 1h4v5h5v4h-5v5H6v-5H1V6h5z" fill="#b8b8e8" stroke="#6868a8"/></svg></span><span class="pc"><svg viewBox="0 0 16 8"><rect x="1" y="2" width="14" height="4" fill="#b8b8e8" stroke="#8888c0"/></svg></span></div>
  <hr class="pd">
  <div class="pr"><span class="pc"><svg viewBox="0 0 16 14"><path d="M5 13C15 15 17 3 8 3H4M1 4l5-3v6z" fill="none" stroke="#556"/><path d="M1 5l4-3v6z" fill="#445"/></svg></span><span class="pc"><svg viewBox="0 0 14 16"><path d="M1 3h12M3 3l1 12h6l1-12M5 1h4M5.500 5v8M8.500 5v8" fill="none" stroke="#334" stroke-width="1.200"/></svg></span></div>
  <div class="pr"><span class="pc"><svg viewBox="0 0 14 16"><path d="M1 1h8l4 4v10H1z" fill="#fff" stroke="#111"/></svg></span><span class="pc"><svg viewBox="0 0 16 16"><path d="M1 1h8v10H1z" fill="#dde" stroke="#446"/><path d="M6 5h5l4 3v7H6z" fill="#dde" stroke="#446"/></svg></span></div>
  <div class="pr"><span class="pc"><svg viewBox="0 0 18 16"><path d="M4 1h9l2 5H3z" fill="#eee" stroke="#446"/><rect x="1" y="6" width="16" height="7" fill="#c0c0e0" stroke="#446"/><path d="M3 13h12v2H3z" fill="#889"/></svg></span><span class="pc"><svg viewBox="0 0 16 16"><path d="M1 1h14v14H1z" fill="#b0b0d8" stroke="#334"/><path d="M4 1h8v6H4z" fill="#dde"/><path d="M4 10h8v5H4z" fill="#333"/></svg></span></div>
  <div class="pr"><span class="pc"><svg viewBox="0 0 18 14"><path d="M6 1h11v10H6z" fill="#dde" stroke="#668"/><path d="M9 4h5M9 7h5" stroke="#446"/><path d="M0 13h4M2 10h2" stroke="#888" stroke-dasharray="1 1"/></svg></span><span class="pc"><svg viewBox="0 0 16 16"><circle cx="8" cy="8" r="8" fill="#1f8fe0"/><path d="M8 3v2M8 7v6" stroke="#fff" stroke-width="2"/></svg></span></div>
</aside>
</body>
</html>
```
FILE: styles.css
```css
* { box-sizing: border-box; }
html, body { margin: 0; padding: 0; width: 1920px; height: 1080px; overflow: hidden; background: #000; }
body { font-family: "Liberation Sans", "Noto Sans CJK SC", sans-serif; font-size: 12px; color: #d6d9de; display: flex; flex-direction: column; position: relative; }
i { font-style: normal; }
.defs { position: absolute; }

.window { height: 1040px; border: 2px solid #17628f; border-bottom-width: 1px; display: flex; flex-direction: column; background: #222a35; }

/* Arrow glyph */
.ar { display: inline-block; width: 0; height: 0; border: 3.500px solid transparent; border-top: 4px solid #d6d9de; border-bottom: 0; flex: none; }

/* Title bar */
.titlebar { height: 30px; display: flex; align-items: center; flex: none; padding-bottom: 6px; }
.qat { width: 590px; display: flex; align-items: center; padding-left: 8px; flex: none; }
.logo { width: 16px; height: 18px; }
.ar-logo { margin-left: 3px; }
.q { width: 19px; height: 19px; margin-right: 5px; flex: none; }
.q-first { margin-left: 17px; }
.u { width: 18px; height: 18px; margin-left: 1px; flex: none; }
.ar-u { margin: 0 0 0 4px; }
.u.r { margin-left: 8px; }
.ar-dim { margin-left: 6px; }
.cust { width: 9px; height: 8px; margin-left: 7px; border-top: 2px solid #d6d9de; position: relative; }
.cust::after { content: ""; position: absolute; left: 0; top: 2px; border: 4.500px solid transparent; border-top: 5px solid #d6d9de; border-bottom: 0; }
.share { width: 18px; height: 18px; margin-left: 8px; }
.share-t { margin-left: 3px; color: #d6d9de; }
.app-title { width: 752px; font-size: 13px; letter-spacing: -.23px; color: #c9cdd2; display: flex; gap: 16px; white-space: nowrap; flex: none; }
.tb-right { flex: 1; display: flex; align-items: center; }
.tri-r { width: 0; height: 0; border: 4px solid transparent; border-left: 4px solid #d6d9de; border-right: 0; }
.search { width: 177px; height: 20px; margin-left: 4px; background: #424c5b; color: #8d95a2; font-style: italic; line-height: 20px; padding-left: 3px; font-size: 11px; }
.mag { width: 16px; height: 16px; margin-left: 6px; }
.user { width: 16px; height: 16px; margin-left: 8px; }
.login { margin-left: 4px; }
.ar-login { margin-left: 60px; }
.cart { width: 18px; height: 18px; margin-left: 12px; }
.a360 { width: 18px; height: 18px; margin-left: 3px; }
.ar-a { margin-left: 3px; }
.vdiv { width: 1px; height: 22px; background: #4a5361; margin-left: 9px; }
.help { width: 16px; height: 16px; border-radius: 50%; background: #d4d4d4; color: #222a35; font-weight: bold; text-align: center; line-height: 16px; margin-left: 12px; }
.ar-h { margin-left: 6px; }
.wmin { width: 8px; height: 2px; background: #e4e4e4; margin: 8px 0 0 64px; }
.wmax { width: 12px; height: 12px; border: 1px solid #e4e4e4; margin-left: 22px; }
.wclose { width: 14px; height: 14px; margin-left: 7px; }

/* Tabs */
.tabs { height: 20px; display: flex; align-items: center; padding-left: 5px; flex: none; color: #a8afb9; }
.tab { padding: 0 10px; height: 20px; line-height: 22px; white-space: nowrap; }
.tab.on { background: #3b4453; color: #f0f0f0; width: 43px; text-align: center; padding: 0; margin-right: 1px; }
.tab.en { font-size: 13px; padding-right: 10px; }
.tabbox { width: 15px; height: 8px; background: #e4e4e4; margin-left: 21px; }
.ar-tab { margin-left: 3px; }

/* Ribbon */
.ribbon { height: 99px; margin: 0 3px; background: #3b4453; display: flex; flex: none; }
.ribbon-gap { height: 3px; flex: none; background: #2b323d; }
.panel { display: flex; flex-direction: column; border-right: 1px solid #2c333f; flex: none; }
.p-draw { width: 211px; } .p-mod { width: 226px; } .p-ann { width: 157px; } .p-lay { width: 251px; }
.p-blk { width: 134px; } .p-prop { width: 244px; } .p-grp { width: 68px; } .p-uti { width: 77px; }
.p-clip { width: 76px; } .p-view { width: 60px; border-right: 0; }
.pbody { height: 81px; display: flex; padding-top: 6px; }
.pfoot { height: 16px; display: flex; align-items: center; justify-content: center; gap: 6px; color: #c6cad0; line-height: 14px; }
.f-prop { position: relative; padding-right: 14px; }
.launch { width: 6px; height: 6px; border-right: 1px solid #c6cad0; border-bottom: 1px solid #c6cad0; position: absolute; right: 4px; top: 6px; }
.f-view { position: relative; justify-content: flex-start; padding-left: 5px; }
.l2 { right: 6px; }
.f-grp { padding-left: 2px; }

.lg { display: flex; flex-direction: column; align-items: center; flex: none; line-height: 20px; white-space: nowrap; }
.big { width: 32px; height: 32px; margin: 2px 0 2px; flex: none; }
.bigA { font-size: 44px; line-height: 36px; height: 34px; margin-top: -1px; margin-bottom: 1px; color: #d8d8d8; font-family: "Liberation Sans", sans-serif; }
.two span + span { line-height: 18px; }
.w37 { width: 37px; } .w39 { width: 39px; } .w40 { width: 44px; } .w42 { width: 42px; } .w43 { width: 43px; } .w44 { width: 44px; } .w48 { width: 51px; } .w50 { width: 50px; } .w60 { width: 60px; }
.ar-lg { margin-top: -1px; }

.col { display: flex; flex-direction: column; flex: none; }
.s { display: flex; align-items: center; height: 24px; gap: 4px; white-space: nowrap; line-height: 16px; }
.i { width: 20px; height: 20px; flex: none; }
.col-dr { margin-left: 5px; }
.ar-s { margin-left: 0; }
.col60 { width: 60px; margin-left: 4px; }
.col59 { width: 59px; }
.col75 { width: 75px; }
.ar-m { margin-left: 7px; }
.ar-m2 { margin-left: 5px; }
.col-an { margin-left: 3px; }
.ar-an { margin-left: 4px; }
.col-blk { margin-left: 0; }
.ar-bl { margin-left: 6px; }

.lay-main { display: flex; flex-direction: column; margin-left: 0; }
.lay-drop { width: 206px; height: 21px; margin-top: 1px; background: #465263; display: flex; align-items: center; padding-left: 2px; gap: 3px; }
.st { width: 16px; height: 16px; flex: none; }
.swatch { width: 14px; height: 14px; background: #00d8ff; border: 1px solid #111; margin-left: 3px; }
.lay-name { margin-left: 3px; }
.ar-drop { margin-left: auto; margin-right: 3px; }
.lay-row { height: 24px; display: flex; align-items: center; margin-top: 0; }
.lay-row:nth-child(2) { margin-top: 2px; }
.lay-i { width: 20px; height: 20px; margin-right: 4px; flex: none; }
.lay-t { margin-left: 0; }

.prop-ic { display: flex; flex-direction: column; gap: 4px; margin-left: -2px; }
.wheel { width: 18px; height: 20px; border-radius: 50%; margin: 1px 1px 0; background: conic-gradient(#f0a040, #d04040, #b050b0, #4080d0, #40b070, #e0e040, #f0a040); }
.prop-drops { margin-left: 0; margin-top: 1px; display: flex; flex-direction: column; gap: 3px; }
.drop { width: 180px; height: 21px; background: #465263; display: flex; align-items: center; padding-left: 4px; position: relative; }
.sw2 { width: 16px; height: 16px; background: #00d8ff; margin-left: 9px; }
.dt1 { margin-left: 10px; }
.ln { width: 64px; height: 1px; background: #e4e4e4; margin-right: 3px; }
.ar-drop2 { position: absolute; right: 3px; top: 8px; }
.s-on { background: #2d4d6e; box-shadow: inset 0 0 0 1px #6fa7d8; height: 23px; width: 24px; padding: 2px; margin-left: -2px; }

/* Canvas */
.canvas { flex: 1; position: relative; background: #000; min-height: 0; }
.cad { display: block; width: 100%; height: 100%; }
.cyan { fill: #00dcfc; }
.axis { fill: none; stroke: #a8a8a8; stroke-width: 1; stroke-dasharray: 79.500 39.500 1 39.500; }
.gr { fill: none; stroke: #1f9a2e; stroke-width: 1; }
.tick { fill: none; stroke: #22c53a; stroke-width: 4; }
.pipe { fill: none; stroke: #ff2200; stroke-width: 6; }
.wh { fill: none; stroke: #d8d8d8; stroke-width: 1; }
.halo { fill: rgba(255, 240, 0, .3); }
.ink { fill: none; stroke: #ff2a10; stroke-width: 2.400; stroke-linecap: round; }
.txt { fill: #e2e2e2; stroke: #000; stroke-width: 1.100; }
.lat, .lat text { font-family: "Roboto", "DejaVu Sans", sans-serif; font-weight: 100; stroke-width: .2; }
.cjk { font-family: "Noto Sans CJK SC", sans-serif; }
.teal { fill: #3cc4dc; }
.lat.teal, .lat.teal text { stroke-width: 0; }
.mag { fill: #ff3cff; stroke-width: 1; }
.ring { fill: none; stroke: #2a2a2a; stroke-width: 12; }
.cube { fill: rgba(200, 200, 200, .78); }
.cube2 { fill: #8c8c8c; }
.cube-t { font: 24px "Noto Sans CJK SC", sans-serif; fill: #555; }
.dir { font: 18px "Noto Sans CJK SC", sans-serif; fill: #999; text-anchor: middle; }
.wcs { fill: #7d7d7d; }
.wcs-t { font: 11px "Liberation Sans", sans-serif; fill: #3f3f3f; }
.navbar { fill: #2c2c2c; }
.ucs { fill: none; stroke: #e4e4e4; stroke-width: 1; }
.vp { font: 12px "Noto Sans CJK SC", sans-serif; fill: #d8d8d8; }
.cursor { fill: #fff; stroke: #222; stroke-width: .5; }

/* Command line */
.cmd { position: absolute; left: 401px; bottom: 1px; width: 1113px; height: 25px; display: flex; }
.cmd-d { width: 56px; background: #2a303a; border-radius: 3px 0 0 0; display: flex; align-items: center; flex: none; }
.grip { width: 5px; height: 20px; margin-left: 4px; background: repeating-linear-gradient(#8d95a2 0 2px, transparent 2px 4px); border-right: 0; }
.c1 { width: 10px; height: 10px; margin-left: 5px; }
.c2 { width: 15px; height: 15px; margin-left: 9px; }
.cmd-in { flex: 1; background: #b1b1b1; display: flex; align-items: center; border-radius: 0 3px 0 0; }
.c3 { width: 16px; height: 14px; margin-left: 4px; }
.ar-c { margin-left: 2px; border-top-color: #777; }
.cmd-t { margin-left: 9px; color: #6a6a6a; font-style: italic; letter-spacing: 1px; }
.tri-u { margin-left: auto; margin-right: 3px; width: 0; height: 0; border: 3.500px solid transparent; border-bottom: 4px solid #555; border-top: 0; }

/* Status bar */
.status { height: 32px; flex: none; display: flex; padding-top: 2px; gap: 3px; align-items: flex-start; position: relative; background: #222a35; }
.layouts { width: 520px; display: flex; align-items: center; height: 17px; margin-top: -1px; padding-left: 16px; flex: none; color: #a8afb9; }
.lt { width: 54px; text-align: center; line-height: 17px; background: #2d3541; border-radius: 0 0 4px 4px; }
.lt.on { width: 44px; background: #3b4453; color: #f4f4f4; font-weight: bold; }
.lt.plus { width: 20px; margin-left: 6px; font-size: 14px; font-weight: bold; }
.sg { height: 24px; background: #3b4453; display: flex; align-items: center; gap: 1px; flex: none; white-space: nowrap; color: #e0e2e6; }
.g-scale { width: 69px; padding-left: 1px; gap: 4px; }
.g-coord { width: 139px; justify-content: flex-end; padding-right: 5px; margin-left: -1px; }
.g-model { width: 31px; justify-content: center; }
.g-snap { gap: 1.250px; }
.g-c { gap: 2px; }
.g-d { margin-left: 2px; }
.it { width: 23px; height: 24px; display: flex; align-items: center; justify-content: center; flex: none; }
.it svg { width: 16px; height: 16px; }
.it.on { background: #5586bd; }
.it-a { width: 15px; display: flex; justify-content: center; flex: none; }
.ratio { width: 54px; margin-left: 3px; font-size: 12px; letter-spacing: -.3px; }
.g-unit { width: 97px; padding-left: 8px; }
.ruler { width: 10px; height: 18px; }
.unit-t { margin-left: 11px; }
.ar-unit { margin-left: 30px; }
.g-menu { width: 20px; margin-left: 155px; justify-content: center; }
.g-menu svg { width: 14px; height: 14px; }
.ime { position: absolute; left: 1759px; top: 2px; width: 137px; height: 24px; background: #fff; display: flex; align-items: center; color: #333; gap: 6.500px; padding-left: 6px; }
.ime svg { width: 16px; height: 16px; flex: none; }
.ime-s { position: absolute; left: -25px; top: -2px; width: 26px; height: 26px; border-radius: 4px; background: #2d9a2e; color: #fff; font: bold italic 24px/26px "Liberation Sans", sans-serif; text-align: center; transform: rotate(-8deg); }
.ime-c { font-size: 15px; margin-right: 1px; color: #333; }
.ime-p { font-size: 14px; font-weight: bold; width: 14px; }

/* Taskbar */
.taskbar { height: 40px; flex: none; display: flex; align-items: center; background: linear-gradient(90deg, #1c3345, #22384b 50%, #1e2f44); }
.tk-start { width: 48px; display: flex; justify-content: center; }
.tk-start svg { width: 16px; height: 16px; }
.tk-search { width: 51.500px; display: flex; justify-content: center; }
.tk-search svg { width: 24px; height: 24px; }
.tk { width: 49px; height: 40px; display: flex; align-items: center; justify-content: center; position: relative; }
.tk svg { width: 24px; height: 24px; overflow: hidden; }
.tk::after { content: ""; position: absolute; left: 4.500px; right: 4.500px; bottom: 0; height: 2px; background: #76b9ed; }
.tk.act::before { content: ""; position: absolute; left: 4.500px; right: 4.500px; top: 29px; bottom: 0; background: #485a69; z-index: 0; }
.tk.act svg { position: relative; }
.tk-pdf { font: bold 9px "Liberation Sans", sans-serif; fill: #fff; }
.tk-q { font: bold 18px "Liberation Sans", sans-serif; fill: #f7e13c; }
.tray { margin-left: auto; display: flex; align-items: center; color: #e4e4e4; padding-right: 25px; }
.tr-up { width: 12px; height: 8px; }
.tr-mic { width: 12px; height: 20px; margin-left: 11px; }
.tr-sp { width: 16px; height: 16px; margin-left: 10px; }
.tr-net { width: 16px; height: 16px; margin-left: 10px; }
.tr-zh { margin-left: 9px; font-size: 13px; }
.tr-s { margin-left: 14px; width: 15px; height: 17px; background: #2d9a2e; color: #fff; font: bold italic 13px/17px "Liberation Sans", sans-serif; text-align: center; border-radius: 2px; transform: rotate(-8deg); }
.clock { display: flex; flex-direction: column; align-items: center; width: 68px; margin-left: 13px; line-height: 18px; font-size: 12px; }
.tr-note { width: 18px; height: 18px; margin-left: 12px; }

/* Pointofix floating toolbar */
.pfx { position: absolute; left: 1849px; top: 55px; width: 52px; height: 543px; background: #f0f0f0; display: flex; flex-direction: column; padding: 0 1px; z-index: 5; }
.pfx-head { height: 27px; margin: 0 -1px; padding: 2px 2px 0 3px; background: #fff; display: flex; justify-content: space-between; color: #888; font-size: 12px; letter-spacing: .8px; }
.pfx-head b { width: 18px; height: 19px; background: #e2e2e2; color: #cfcfcf; text-align: center; font-size: 10px; line-height: 19px; font-weight: normal; }
.pfx-exit { height: 25px; margin-bottom: 1px; border: 2px solid #1a6fb0; background: #e5e5e5; color: #000; text-align: center; line-height: 21px; font-size: 14px; flex: none; }
.pr { height: 24px; display: flex; flex: none; }
.pc { width: 25px; height: 24px; display: flex; align-items: center; justify-content: center; flex: none; color: #111; }
.pc svg { width: 18px; height: 18px; }
.pc svg.sm { width: 15px; height: 14px; }
.pc svg.xs { width: 11px; height: 11px; }
.pc.on { background: #bcdcf8; box-shadow: inset 0 0 0 1px #a4c6e6; }
.pc.sel { background: #dce8f5; box-shadow: inset 0 0 0 1px #a4c6e6; }
.pc-a { font: 20px "Liberation Sans", sans-serif; }
.dot { display: block; border-radius: 50%; background: #7a7768; }
.d1 { width: 4px; height: 4px; background: #5f6f80; }
.d2 { width: 8px; height: 8px; }
.d3 { width: 12px; height: 12px; }
.d4 { width: 16px; height: 16px; }
.pd { width: 46px; height: 1px; margin: 4px auto 3px; border: 0; background: #b4b4b4; flex: none; }
.pd:first-of-type { margin-bottom: 4px; }
.c { display: block; width: 18px; height: 18px; }
.g-r { background: linear-gradient(135deg, #fff, #f02a1a); }
.g-y { background: linear-gradient(135deg, #fff, #ffe800); }
.g-g { background: linear-gradient(135deg, #fff, #00c820); }
.g-b { background: linear-gradient(135deg, #fff, #0818e8); }
.f-r { background: #ff1e0c; } .f-y { background: #ffe800; } .f-g { background: #00d818; } .f-b { background: #0000f0; } .f-w { background: #fff; } .f-k { background: #000; }
```
